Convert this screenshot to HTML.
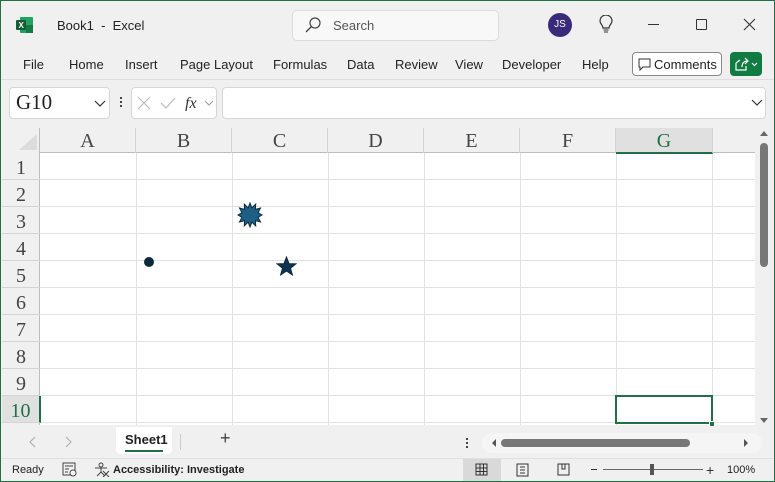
<!DOCTYPE html><html><head><style>
*{margin:0;padding:0;box-sizing:border-box}
body{width:775px;height:482px;overflow:hidden;background:#f0f0f0;font-family:"Liberation Sans",sans-serif;font-size:13px;color:#222;position:relative}
.a{position:absolute}
.frame{position:absolute;inset:0;border:1px solid #1e7145;pointer-events:none;z-index:9}
.menu span{position:absolute;top:57px;font-size:13px}
.colh{position:absolute;top:128px;height:25px;font-family:"Liberation Serif",serif;font-size:20px;color:#444;text-align:center;line-height:26px;border-right:1px solid #d4d4d4}
.rowh{position:absolute;left:2px;width:38px;height:27px;font-family:"Liberation Serif",serif;font-size:20px;color:#444;text-align:center;line-height:30px;border-bottom:1px solid #d4d4d4}
</style></head><body>
<div class="frame"></div>
<!-- title bar -->
<svg class="a" style="left:16px;top:17px" width="18" height="16"><rect x="4" y="0" width="13" height="16" rx="1" fill="#21a366"/><rect x="10" y="8" width="7" height="8" fill="#107c41"/><rect x="0" y="3" width="10" height="10" rx="1" fill="#185c37"/><text x="2.5" y="11" font-size="8" fill="#fff" font-family="Liberation Sans" font-weight="bold">X</text></svg>
<div class="a" style="left:57px;top:18px;font-size:13px">Book1&nbsp; - &nbsp;Excel</div>
<div class="a" style="left:292px;top:10px;width:207px;height:31px;background:#f8f8f8;border:1px solid #dcdcdc;border-radius:5px"></div>
<svg class="a" style="left:305px;top:17px" width="16" height="16"><circle cx="10" cy="6" r="5" fill="none" stroke="#444" stroke-width="1.2"/><line x1="6.5" y1="9.5" x2="1" y2="15" stroke="#444" stroke-width="1.3"/></svg>
<div class="a" style="left:333px;top:18px;color:#555">Search</div>
<div class="a" style="left:548px;top:13px;width:24px;height:24px;border-radius:50%;background:#3a2a7a;color:#fff;font-size:10px;text-align:center;line-height:24px">JS</div>
<svg class="a" style="left:598px;top:15px" width="16" height="20"><path d="M5 13 C5 10 2 9 2 6 A6 6 0 0 1 14 6 C14 9 11 10 11 13 Z" fill="none" stroke="#333" stroke-width="1.2"/><line x1="5.5" y1="15" x2="10.5" y2="15" stroke="#333"/><line x1="6" y1="17" x2="10" y2="17" stroke="#333"/></svg>
<div class="a" style="left:648px;top:24px;width:11px;height:1px;background:#333"></div>
<div class="a" style="left:696px;top:19px;width:11px;height:11px;border:1px solid #333;border-radius:1px"></div>
<svg class="a" style="left:743px;top:18px" width="13" height="13"><path d="M1 1L12 12M12 1L1 12" stroke="#333" stroke-width="1.1"/></svg>
<!-- menu -->
<div class="menu"><span style="left:23px">File</span><span style="left:69px">Home</span><span style="left:125px">Insert</span><span style="left:180px">Page Layout</span><span style="left:273px">Formulas</span><span style="left:347px">Data</span><span style="left:395px">Review</span><span style="left:455px">View</span><span style="left:502px">Developer</span><span style="left:582px">Help</span></div>
<div class="a" style="left:632px;top:52px;width:90px;height:24px;border:1px solid #888;border-radius:4px;background:#fff"></div>
<svg class="a" style="left:638px;top:58px" width="13" height="13"><path d="M1 1H12V9H5L2 12V9H1Z" fill="none" stroke="#333"/></svg>
<div class="a" style="left:654px;top:57px">Comments</div>
<div class="a" style="left:730px;top:52px;width:32px;height:24px;border-radius:4px;background:#107c41"></div>
<svg class="a" style="left:734px;top:56px" width="26" height="16"><path d="M2 7V14H12V10M2 7L6 4M8 11C8 7 10 5 14 5M11 2L14 5L11 8" fill="none" stroke="#fff" stroke-width="1.2"/><path d="M18 7L20.5 9.5L23 7" fill="none" stroke="#fff" stroke-width="1.2"/></svg>
<div class="a" style="left:0;top:79px;width:775px;height:1px;background:#dedede"></div>
<!-- formula bar -->
<div class="a" style="left:9px;top:87px;width:101px;height:32px;background:#fff;border:1px solid #d6d6d6;border-radius:4px"></div>
<div class="a" style="left:16px;top:90px;font-family:'Liberation Serif',serif;font-size:21px">G10</div>
<svg class="a" style="left:94px;top:100px" width="12" height="8"><path d="M1 1L6 6L11 1" fill="none" stroke="#333" stroke-width="1.2"/></svg>
<div class="a" style="left:120px;top:97px;width:2px;height:2px;background:#444;box-shadow:0 4px #444,0 8px #444"></div>
<div class="a" style="left:131px;top:87px;width:86px;height:32px;background:#fff;border:1px solid #d6d6d6;border-radius:4px"></div>
<svg class="a" style="left:137px;top:95px" width="80" height="16"><path d="M1 2L13 14M13 2L1 14" stroke="#bbb" stroke-width="1.2"/><path d="M24 8L29 13L38 3" fill="none" stroke="#bbb" stroke-width="1.2"/><text x="48" y="13" font-family="Liberation Serif" font-style="italic" font-size="16" fill="#333">fx</text><path d="M68 6L72 10L76 6" fill="none" stroke="#999"/></svg>
<div class="a" style="left:222px;top:87px;width:544px;height:32px;background:#fff;border:1px solid #d6d6d6;border-radius:4px"></div>
<svg class="a" style="left:751px;top:99px" width="12" height="8"><path d="M1 1L6 6L11 1" fill="none" stroke="#333" stroke-width="1.2"/></svg>
<!-- grid -->
<div class="a" style="left:2px;top:128px;width:753px;height:297px;background:#fff"></div>
<div class="a" style="left:2px;top:128px;width:753px;height:25px;background:#f0f0f0;border-bottom:1px solid #bdbdbd"></div>
<div class="a" style="left:2px;top:128px;width:38px;height:297px;background:#f0f0f0;border-right:1px solid #bdbdbd"></div>
<svg class="a" style="left:18px;top:133px" width="20" height="18"><path d="M19 1V17H1Z" fill="#dcdcdc"/></svg>
<svg class="a" style="left:40px;top:153px" width="715" height="272">
<g stroke="#e1e1e1" stroke-width="1">
<path d="M96.5 0V272M192.5 0V272M288.5 0V272M384.5 0V272M480.5 0V272M576.5 0V272M672.5 0V272"/>
<path d="M0 26.5H715M0 53.5H715M0 80.5H715M0 107.5H715M0 134.5H715M0 161.5H715M0 188.5H715M0 215.5H715M0 242.5H715M0 269.5H715"/>
</g></svg>
<div class="colh" style="left:40px;width:96px">A</div><div class="colh" style="left:136px;width:96px">B</div><div class="colh" style="left:232px;width:96px">C</div><div class="colh" style="left:328px;width:96px">D</div><div class="colh" style="left:424px;width:96px">E</div><div class="colh" style="left:520px;width:96px">F</div>
<div class="colh" style="left:616px;width:97px;background:#e0e0e0;color:#1e7145;border-bottom:2px solid #1e7145;height:26px">G</div>
<div class="rowh" style="top:153px">1</div><div class="rowh" style="top:180px">2</div><div class="rowh" style="top:207px">3</div><div class="rowh" style="top:234px">4</div><div class="rowh" style="top:261px">5</div><div class="rowh" style="top:288px">6</div><div class="rowh" style="top:315px">7</div><div class="rowh" style="top:342px">8</div><div class="rowh" style="top:369px">9</div>
<div class="rowh" style="top:396px;background:#e0e0e0;color:#1e7145;border-right:2px solid #1e7145;width:39px">10</div>
<div class="a" style="left:615px;top:395px;width:98px;height:29px;border:2px solid #1e7145"></div>
<div class="a" style="left:709px;top:421px;width:6px;height:6px;background:#1e7145;border:1px solid #fff"></div>
<!-- shapes -->
<svg class="a" style="left:237px;top:202px" width="26" height="26"><polygon fill="#1e5f86" stroke="#0d2a3d" stroke-width="1" points="13,1 14.9,5.9 18.7,2.1 18.4,7.3 23.5,6 21.1,10.7 25,13 21.1,15.3 23.5,20 18.4,18.7 18.7,23.9 14.9,20.1 13,25 11.1,20.1 7.3,23.9 7.6,18.7 2.5,20 4.9,15.3 1,13 4.9,10.7 2.5,6 7.6,7.3 7.3,2.1 11.1,5.9"/></svg>
<div class="a" style="left:144px;top:257px;width:10px;height:10px;border-radius:50%;background:#0d2a3d"></div>
<svg class="a" style="left:276px;top:256px" width="21" height="20"><polygon fill="#0d3550" stroke="#0d2a3d" points="10.5,1 13,7.6 20,7.8 14.5,12.2 16.4,19 10.5,15 4.6,19 6.5,12.2 1,7.8 8,7.6"/></svg>
<!-- vertical scroll -->
<svg class="a" style="left:757px;top:128px" width="14" height="297"><path d="M3 8L7 3L11 8Z" fill="#666"/><rect x="3" y="15" width="8" height="124" rx="4" fill="#777"/><path d="M3 290L7 295L11 290Z" fill="#666"/></svg>
<!-- sheet tabs -->
<svg class="a" style="left:28px;top:436px" width="45" height="12"><path d="M7 1L2 6L7 11M38 1L43 6L38 11" fill="none" stroke="#aaa"/></svg>
<div class="a" style="left:116px;top:427px;width:56px;height:27px;background:#fff;border-radius:0 0 4px 4px"></div>
<div class="a" style="left:125px;top:432px;font-size:13px;font-weight:bold;color:#222">Sheet1</div>
<div class="a" style="left:125px;top:450px;width:38px;height:2px;background:#1e7145"></div>
<div class="a" style="left:180px;top:434px;width:1px;height:16px;background:#ccc"></div>
<div class="a" style="left:220px;top:428px;font-size:18px;color:#444">+</div>
<div class="a" style="left:466px;top:438px;width:2px;height:2px;background:#444;box-shadow:0 4px #444,0 8px #444"></div>
<div class="a" style="left:482px;top:433px;width:280px;height:20px;background:#f5f5f5;border-radius:10px"></div>
<svg class="a" style="left:487px;top:436px" width="265" height="14"><path d="M5 7L9 3V11Z" fill="#555"/><rect x="14" y="3" width="189" height="8" rx="4" fill="#777"/><path d="M257 3L261 7L257 11Z" fill="#555"/></svg>
<!-- status bar -->
<div class="a" style="left:1px;top:458px;width:773px;height:23px;background:#f0f0f0;border-top:1px solid #e0e0e0"></div>
<div class="a" style="left:12px;top:464px;font-size:11px">Ready</div>
<svg class="a" style="left:62px;top:462px" width="16" height="15"><rect x="1" y="1" width="12" height="12" fill="none" stroke="#444"/><path d="M3 4H11M3 7H7M3 10H6" stroke="#444"/><circle cx="11" cy="11" r="3" fill="#fff" stroke="#444"/></svg>
<svg class="a" style="left:94px;top:462px" width="16" height="15"><circle cx="7" cy="3" r="2" fill="none" stroke="#444"/><path d="M1 6H13M7 6V10L3 14M7 10L11 14" fill="none" stroke="#444"/><path d="M9 9L15 15M15 9L9 15" stroke="#444"/></svg>
<div class="a" style="left:113px;top:464px;font-size:11px;font-weight:bold">Accessibility: Investigate</div>
<div class="a" style="left:463px;top:459px;width:38px;height:22px;background:#d9d9d9"></div>
<svg class="a" style="left:475px;top:463px" width="100" height="14"><path d="M1 1H12V12H1ZM1 5H12M1 8.5H12M5 1V12M8.5 1V12" fill="none" stroke="#333"/><rect x="42" y="1" width="11" height="12" fill="none" stroke="#333"/><path d="M45 4H50M45 7H50M45 10H50" stroke="#333"/><path d="M83 1H94V12H83ZM87 1V6H90V1" fill="none" stroke="#333"/></svg>
<div class="a" style="left:591px;top:469px;width:6px;height:1px;background:#333"></div>
<div class="a" style="left:603px;top:469px;width:100px;height:1px;background:#666"></div>
<div class="a" style="left:650px;top:464px;width:4px;height:11px;background:#555"></div>
<div class="a" style="left:706px;top:462px;font-size:14px;color:#333">+</div>
<div class="a" style="left:727px;top:464px;font-size:11px">100%</div>
</body></html>
